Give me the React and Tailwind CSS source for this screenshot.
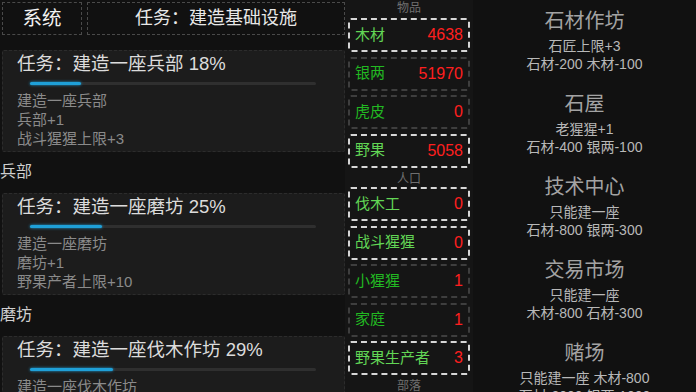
import React from "react";

const FONT = { fontFamily: '"Liberation Sans", "Noto Sans CJK SC", sans-serif' };

const tasks = [
  { title: "任务：建造一座兵部 18%", pct: 18, lines: ["建造一座兵部", "兵部+1", "战斗猩猩上限+3"], label: "兵部" },
  { title: "任务：建造一座磨坊 25%", pct: 25, lines: ["建造一座磨坊", "磨坊+1", "野果产者上限+10"], label: "磨坊" },
  { title: "任务：建造一座伐木作坊 29%", pct: 29, lines: ["建造一座伐木作坊", "伐木作坊+1", "木材产者上限+10"], label: "" },
];

const items = [
  { name: "木材", val: "4638", hi: true },
  { name: "银两", val: "51970", hi: false },
  { name: "虎皮", val: "0", hi: false },
  { name: "野果", val: "5058", hi: true },
];
const people = [
  { name: "伐木工", val: "0", hi: true },
  { name: "战斗猩猩", val: "0", hi: true },
  { name: "小猩猩", val: "1", hi: false },
  { name: "家庭", val: "1", hi: false },
  { name: "野果生产者", val: "3", hi: true },
];

const buildings = [
  { name: "石材作坊", lines: ["石匠上限+3", "石材-200 木材-100"] },
  { name: "石屋", lines: ["老猩猩+1", "石材-400 银两-100"] },
  { name: "技术中心", lines: ["只能建一座", "石材-800 银两-300"] },
  { name: "交易市场", lines: ["只能建一座", "木材-800 石材-300"] },
  { name: "赌场", lines: ["只能建一座 木材-800", "石材-2000 银两-1000"] },
];

function TaskCard({ t }) {
  return (
    <div className="h-[102px] shrink-0 overflow-hidden rounded-[2px] border border-dashed border-[#2c2c2c] bg-[#1c1c1c] pl-[14px] pt-[3px]">
      <div className="h-[20px] text-[18.5px] leading-[20px] text-[#dcdcdc]">{t.title}</div>
      <div className="ml-[13px] mt-[8px] h-[3px] w-[286px] rounded-full bg-[#2f2f2f]">
        <div className="h-[3px] rounded-full bg-[#1fa0d8] shadow-[0_0_3px_#1fa0d8]" style={{ width: `${t.pct}%` }} />
      </div>
      <div className="mt-[6px] text-[15px] leading-[19px] text-[#8a8a8a]">
        {t.lines.map((l) => (
          <div key={l}>{l}</div>
        ))}
      </div>
    </div>
  );
}

function StatBox({ s }) {
  return (
    <div
      className={
        "flex h-[34px] shrink-0 items-center justify-between rounded-[3px] border-2 border-dashed px-[5px] text-[15px] " +
        (s.hi ? "border-[#d6d6d6]" : "border-[#3e3e3e]")
      }
    >
      <span className={s.hi ? "text-[#62d655]" : "text-[#22b922]"}>{s.name}</span>
      <span className="text-[16px] text-[#ff1f1f]">{s.val}</span>
    </div>
  );
}

export default function App() {
  return (
    <div className="flex h-[392px] w-[696px] overflow-hidden bg-[#111111]" style={FONT}>
      {/* Left column */}
      <div className="flex w-[345px] shrink-0 flex-col pl-[2px] pt-[2px]">
        <div className="flex h-[33px] shrink-0 gap-[5px]">
          <div className="flex w-[80px] items-center justify-center border border-dashed border-[#4a4a4a] text-[19.5px] text-[#f2f2f2]">
            系统
          </div>
          <div className="flex flex-1 items-center justify-center border border-dashed border-[#4a4a4a] text-[18px] text-[#e8e8e8]">
            任务：建造基础设施
          </div>
        </div>
        <div className="h-[15px] shrink-0" />
        {tasks.map((t, i) => (
          <React.Fragment key={i}>
            <TaskCard t={t} />
            {t.label && (
              <div className="-ml-[2px] flex h-[41px] shrink-0 items-center pb-[1px] text-[16px] text-[#cfcfcf]">
                {t.label}
              </div>
            )}
          </React.Fragment>
        ))}
      </div>

      {/* Middle column */}
      <div className="flex w-[128px] shrink-0 flex-col bg-[#151515] px-[3px]">
        <div className="h-[18px] shrink-0 text-center text-[12px] leading-[16px] text-[#6f6f6f]">物品</div>
        <div className="flex flex-col gap-[4.5px]">
          {items.map((s) => (
            <StatBox key={s.name} s={s} />
          ))}
        </div>
        <div className="flex h-[19.5px] shrink-0 items-center justify-center pt-[4px] text-[12px] text-[#6f6f6f]">人口</div>
        <div className="flex flex-col gap-[4.5px]">
          {people.map((s) => (
            <StatBox key={s.name} s={s} />
          ))}
        </div>
        <div className="mt-[3px] text-center text-[12px] leading-[16px] text-[#6f6f6f]">部落</div>
      </div>

      {/* Right column */}
      <div className="flex flex-1 flex-col items-center pt-[9px]">
        {buildings.map((b) => (
          <div key={b.name} className="mb-[19px] flex shrink-0 flex-col items-center">
            <div className="h-[24px] text-[20px] leading-[24px] text-[#a3a3a3]">{b.name}</div>
            <div className="mt-[4px] text-[14px] leading-[18px] text-[#b8b8b8]">
              {b.lines.map((l) => (
                <div key={l} className="text-center">{l}</div>
              ))}
            </div>
          </div>
        ))}
      </div>
    </div>
  );
}
